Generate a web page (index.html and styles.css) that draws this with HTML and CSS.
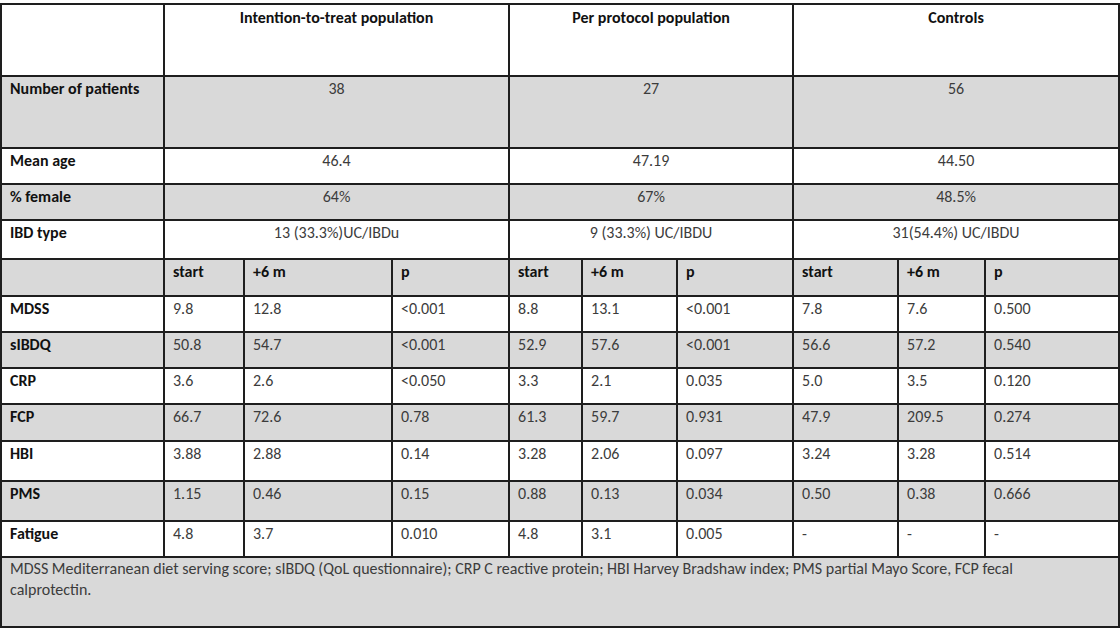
FILE: index.html
```html
<!DOCTYPE html>
<html>
<head>
<meta charset="utf-8">
<link rel="stylesheet" href="styles.css">
</head>
<body>
<table class="tbl">
  <colgroup>
    <col class="c-label">
    <col class="c-a1"><col class="c-a2"><col class="c-a3">
    <col class="c-b1"><col class="c-b2"><col class="c-b3">
    <col class="c-c1"><col class="c-c2"><col class="c-c3">
  </colgroup>
  <tbody>
    <tr class="r-head white">
      <td></td>
      <td colspan="3" class="hd">Intention-to-treat population</td>
      <td colspan="3" class="hd">Per protocol population</td>
      <td colspan="3" class="hd">Controls</td>
    </tr>
    <tr class="r-72 grey">
      <td class="lbl">Number of patients</td>
      <td colspan="3" class="ctr">38</td>
      <td colspan="3" class="ctr">27</td>
      <td colspan="3" class="ctr">56</td>
    </tr>
    <tr class="r-36 white">
      <td class="lbl">Mean age</td>
      <td colspan="3" class="ctr">46.4</td>
      <td colspan="3" class="ctr">47.19</td>
      <td colspan="3" class="ctr">44.50</td>
    </tr>
    <tr class="r-36 grey">
      <td class="lbl">% female</td>
      <td colspan="3" class="ctr">64%</td>
      <td colspan="3" class="ctr">67%</td>
      <td colspan="3" class="ctr">48.5%</td>
    </tr>
    <tr class="r-39 white">
      <td class="lbl">IBD type</td>
      <td colspan="3" class="ctr">13 (33.3%)UC/IBDu</td>
      <td colspan="3" class="ctr">9 (33.3%) UC/IBDU</td>
      <td colspan="3" class="ctr">31(54.4%) UC/IBDU</td>
    </tr>
    <tr class="r-37 grey">
      <td></td>
      <td class="lbl">start</td><td class="lbl">+6 m</td><td class="lbl">p</td>
      <td class="lbl">start</td><td class="lbl">+6 m</td><td class="lbl">p</td>
      <td class="lbl">start</td><td class="lbl">+6 m</td><td class="lbl">p</td>
    </tr>
    <tr class="r-36 white">
      <td class="lbl">MDSS</td>
      <td>9.8</td><td>12.8</td><td>&lt;0.001</td>
      <td>8.8</td><td>13.1</td><td>&lt;0.001</td>
      <td>7.8</td><td>7.6</td><td>0.500</td>
    </tr>
    <tr class="r-36 grey">
      <td class="lbl">sIBDQ</td>
      <td>50.8</td><td>54.7</td><td>&lt;0.001</td>
      <td>52.9</td><td>57.6</td><td>&lt;0.001</td>
      <td>56.6</td><td>57.2</td><td>0.540</td>
    </tr>
    <tr class="r-36 white">
      <td class="lbl">CRP</td>
      <td>3.6</td><td>2.6</td><td>&lt;0.050</td>
      <td>3.3</td><td>2.1</td><td>0.035</td>
      <td>5.0</td><td>3.5</td><td>0.120</td>
    </tr>
    <tr class="r-37 grey">
      <td class="lbl">FCP</td>
      <td>66.7</td><td>72.6</td><td>0.78</td>
      <td>61.3</td><td>59.7</td><td>0.931</td>
      <td>47.9</td><td>209.5</td><td>0.274</td>
    </tr>
    <tr class="r-40 white">
      <td class="lbl">HBI</td>
      <td>3.88</td><td>2.88</td><td>0.14</td>
      <td>3.28</td><td>2.06</td><td>0.097</td>
      <td>3.24</td><td>3.28</td><td>0.514</td>
    </tr>
    <tr class="r-40 grey">
      <td class="lbl">PMS</td>
      <td>1.15</td><td>0.46</td><td>0.15</td>
      <td>0.88</td><td>0.13</td><td>0.034</td>
      <td>0.50</td><td>0.38</td><td>0.666</td>
    </tr>
    <tr class="r-36 white">
      <td class="lbl">Fatigue</td>
      <td>4.8</td><td>3.7</td><td>0.010</td>
      <td>4.8</td><td>3.1</td><td>0.005</td>
      <td>-</td><td>-</td><td>-</td>
    </tr>
    <tr class="r-foot grey">
      <td colspan="10" class="note">MDSS Mediterranean diet serving score; sIBDQ (QoL questionnaire); CRP C reactive protein; HBI Harvey Bradshaw index; PMS partial Mayo Score, FCP fecal<br>calprotectin.</td>
    </tr>
  </tbody>
</table>
</body>
</html>
```

FILE: styles.css
```css
html, body {
  margin: 0;
  padding: 0;
  background: #ffffff;
}

body {
  padding-top: 3px;
}

.tbl {
  border-collapse: collapse;
  table-layout: fixed;
  width: 1119px;
  font-family: Carlito, Lato, "Liberation Sans", sans-serif;
  font-size: 16px;
  line-height: 19px;
  color: #3c3c3c;
}

.c-label { width: 163px; }
.c-a1 { width: 80px; }
.c-a2 { width: 148px; }
.c-a3 { width: 117px; }
.c-b1 { width: 73px; }
.c-b2 { width: 95px; }
.c-b3 { width: 116px; }
.c-c1 { width: 105px; }
.c-c2 { width: 87px; }
.c-c3 { width: 134px; }

.tbl td {
  border: 2px solid #1e1e1e;
  padding: 2px 8px 0 8px;
  vertical-align: top;
  text-align: left;
  white-space: nowrap;
  box-sizing: border-box;
}

.white td { background: #ffffff; }
.grey td { background: #d9d9d9; }

.r-head td { height: 72px; padding-top: 3px; }
.r-72 td { height: 72px; }
.r-36 td { height: 36px; }
.r-37 td { height: 37px; }
.r-39 td { height: 39px; }
.r-40 td { height: 40px; }
.r-foot td { height: 70px; }

.hd {
  text-align: center !important;
  font-weight: bold;
  color: #111111;
}

.lbl {
  font-weight: bold;
  color: #111111;
}

.ctr {
  text-align: center !important;
}

.note {
  line-height: 21px;
  padding-top: 0 !important;
}
```
